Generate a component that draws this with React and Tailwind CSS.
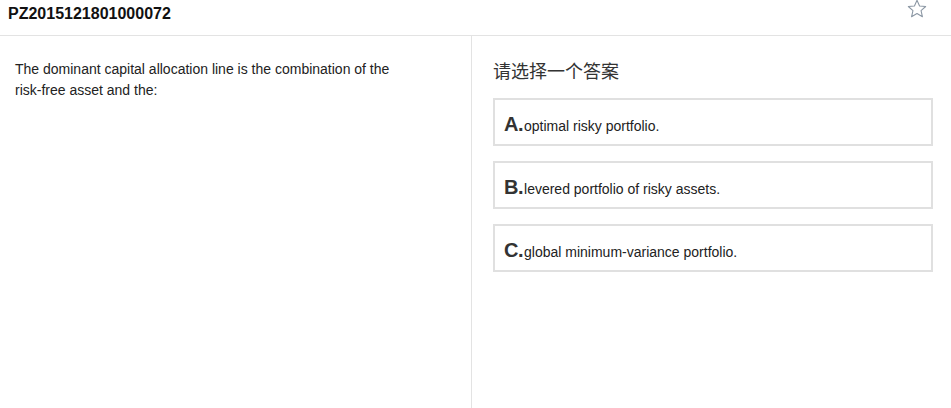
import React from 'react';

const options = [
  { key: 'A', text: 'optimal risky portfolio.' },
  { key: 'B', text: 'levered portfolio of risky assets.' },
  { key: 'C', text: 'global minimum-variance portfolio.' },
];

const StarIcon = () => (
  <svg width="20" height="19" viewBox="0 0 24 23" fill="none" stroke="#8a96a3" strokeWidth="1.3" strokeLinejoin="round">
    <path d="M12 1.5l3.1 6.9 7.4.7-5.6 5 1.7 7.4L12 17.6l-6.6 3.9 1.7-7.4-5.6-5 7.4-.7z" />
  </svg>
);

export default function App() {
  return (
    <div className="w-[951px] h-[408px] bg-white flex flex-col overflow-hidden font-['Liberation_Sans','Noto_Sans_CJK_SC',sans-serif] text-[#222]">
      <div className="h-[36px] shrink-0 border-b border-[#e3e3e3] flex items-start justify-between pl-[8px] pr-[24px]">
        <h1 className="mt-[4px] text-[16px] leading-[20px] font-bold text-[#111]">PZ2015121801000072</h1>
        <div className="-mt-[1px]">
          <StarIcon />
        </div>
      </div>
      <div className="flex flex-1">
        <div className="w-[472px] border-r border-[#e3e3e3] pl-[15px] pr-[60px] pt-[23px]">
          <p className="text-[14px] leading-[21px] text-[#222]">
            The dominant capital allocation line is the combination of the risk-free asset and the:
          </p>
        </div>
        <div className="flex-1 pl-[21px] pr-[18px] pt-[22px]">
          <h2 className="text-[18px] leading-[24px] text-[#333] font-['Noto_Sans_CJK_SC',sans-serif]">请选择一个答案</h2>
          <div className="mt-[16px] flex flex-col gap-[15px]">
            {options.map((o) => (
              <div key={o.key} className="h-[48px] border-2 border-[#e0e0e0] flex items-baseline pl-[9px] pt-[12px]">
                <span className="text-[20px] leading-[24px] font-bold text-[#333] tracking-[-0.5px]">{o.key}.</span>
                <span className="text-[14px] text-[#222] ml-[1px]">{o.text}</span>
              </div>
            ))}
          </div>
        </div>
      </div>
    </div>
  );
}
